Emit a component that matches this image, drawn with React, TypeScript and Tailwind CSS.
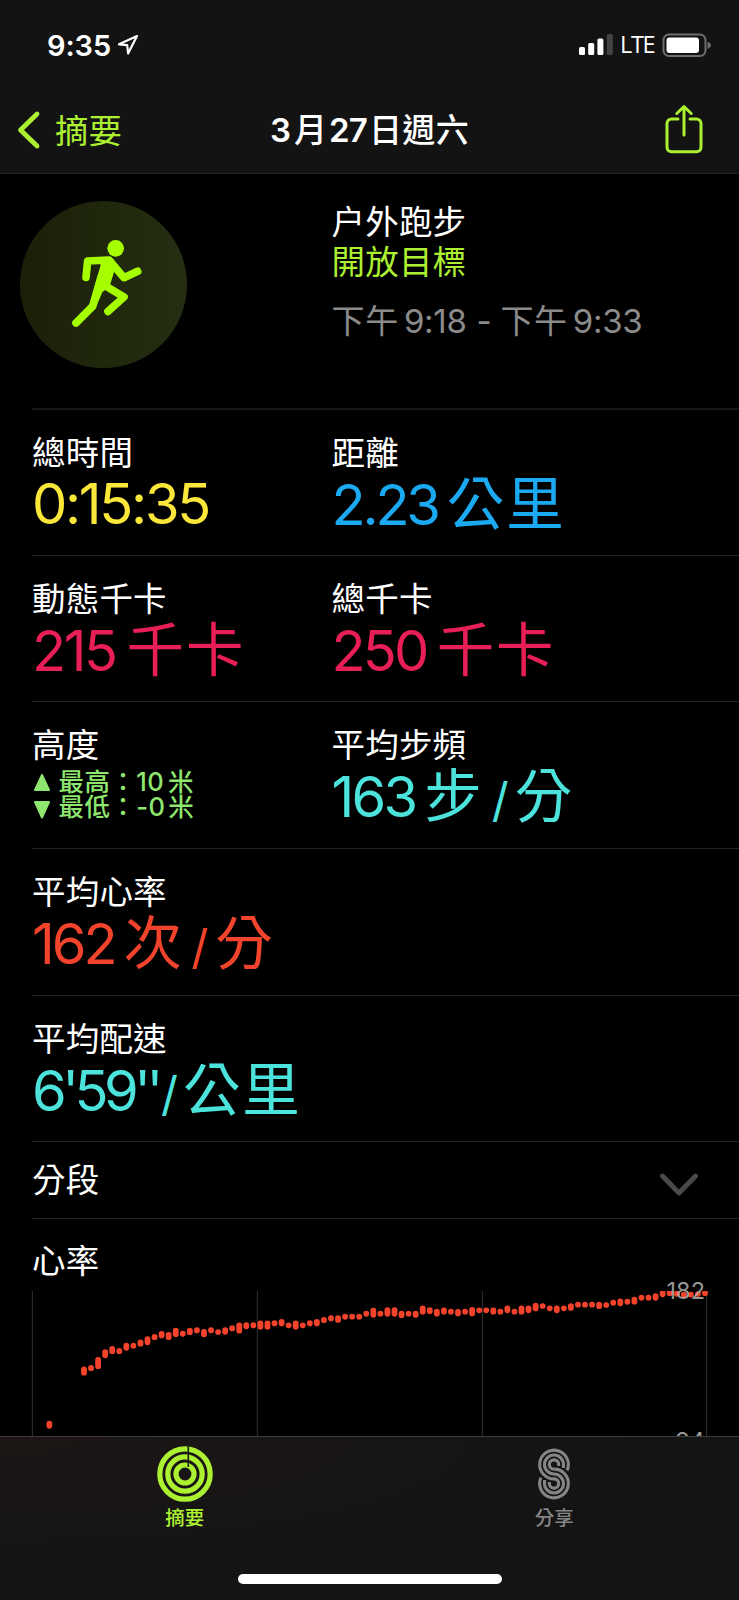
import type { ReactNode } from 'react';

// [y, height] of every heart rate sample, one sample per STEP
const SAMPLES = [
  [513, 27], [504, 18], [489, 36], [461, 27], [450, 24], [453, 18], [440, 24], [437, 17], [429, 21], [422, 27],
  [411, 18], [404, 22], [408, 24], [397, 28], [401, 18], [394, 22], [391, 18], [399, 24], [391, 18], [396, 17],
  [393, 22], [385, 18], [384, 33], [377, 21], [376, 18], [375, 27], [375, 27], [370, 18], [368, 22], [376, 17],
  [375, 27], [376, 17], [370, 18], [368, 22], [360, 18], [355, 18], [357, 23], [350, 18], [350, 17], [350, 17],
  [341, 18], [338, 30], [341, 17], [336, 28], [336, 28], [343, 22], [341, 17], [343, 21], [330, 27], [332, 21],
  [338, 23], [333, 21], [335, 17], [338, 22], [335, 17], [335, 28], [331, 17], [331, 17], [333, 21], [335, 17],
  [328, 23], [335, 17], [330, 27], [328, 23], [321, 26], [318, 17], [325, 17], [328, 23], [325, 17], [321, 23],
  [314, 17], [314, 17], [314, 17], [316, 22], [315, 17], [308, 18], [307, 23], [305, 18], [302, 23], [293, 18],
  [293, 17], [291, 22], [281, 21], [276, 24], [281, 18], [284, 18], [284, 17], [282, 17], [279, 18],
];
const FIRST_X = 252;
const STEP = 21.17;

function Label({ children }: { children: ReactNode }) {
  return <div className="h-10 whitespace-nowrap text-[33.500px] leading-10 tracking-[0.2px]">{children}</div>;
}

function Value({ color, children }: { color: string; children: ReactNode }) {
  return <div className={`flex h-16 items-baseline whitespace-nowrap text-[56px] leading-[62px] ${color}`}>{children}</div>;
}

function Num({ className = 'tracking-[-2.5px]', children }: { className?: string; children: ReactNode }) {
  return <span className={className}>{children}</span>;
}

function Unit({ className = 'ml-[10px]', children }: { className?: string; children: ReactNode }) {
  return <span className={`text-[57.500px] tracking-[2px] ${className}`}>{children}</span>;
}

function Slash({ className = 'ml-[8px]' }: { className?: string }) {
  return <span className={`inline-block w-[17px] text-[47px] ${className}`}>/</span>;
}

function Row({ height = 'h-[146px]', children }: { height?: string; children: ReactNode }) {
  return (
    <div className={`ml-8 grid shrink-0 grid-cols-[299.500px_1fr] border-b border-[#242424] pt-[23px] ${height}`}>
      {children}
    </div>
  );
}

function StatusBar() {
  return (
    <div className="flex h-[90px] items-center pl-[47px] pr-7 text-white">
      <span className="text-[29px] font-semibold leading-none tracking-[-0.1px]">9:35</span>
      <svg className="ml-[6px]" width="22" height="22" viewBox="0 0 22 22" fill="none" stroke="currentColor" strokeWidth="2.2" strokeLinejoin="round">
        <path d="M20 2 2 10.3l8.2.9.9 8.3z" />
      </svg>
      <div className="ml-auto flex items-center">
        <svg width="34" height="22" viewBox="0 0 34 22" fill="currentColor">
          <rect x="0" y="13" width="6" height="8" rx="1.6" />
          <rect x="9.2" y="9" width="6" height="12" rx="1.6" />
          <rect x="18.4" y="4.5" width="6" height="16.5" rx="1.6" />
          <rect x="27.8" y="0" width="6" height="21" rx="1.6" fill="#444" />
        </svg>
        <span className="ml-[7px] w-[36px] font-['Open_Sans','Noto_Sans',sans-serif] text-[23.500px] font-medium leading-none tracking-[-1.3px]">LTE</span>
        <svg className="ml-[6px]" width="49" height="24" viewBox="0 0 49 24">
          <rect x="1.500" y="1.500" width="42" height="21.5" rx="5.5" fill="none" stroke="#6e6e6e" strokeWidth="2" />
          <rect x="4.500" y="4.500" width="32.5" height="15.5" rx="3" fill="#fff" />
          <path d="M45.500 8.700c2.4.8 3.400 2 3.400 3.600s-1 2.800-3.400 3.600z" fill="#6e6e6e" />
        </svg>
      </div>
    </div>
  );
}

function NavBar() {
  return (
    <div className="grid h-[82px] grid-cols-[1fr_auto_1fr] items-center">
      <div className="flex items-center pl-[15px] text-[#acf032]">
        <svg className="mb-[2px]" width="26" height="40" viewBox="0 0 26 40" fill="none" stroke="currentColor" strokeWidth="4.8" strokeLinecap="round" strokeLinejoin="round">
          <path d="M22 4 5.500 20 22 36" />
        </svg>
        <span className="mb-px ml-[14px] text-[33.500px] leading-10">摘要</span>
      </div>
      <div className="flex items-baseline pb-[2px] text-[33px] font-medium leading-10 text-white">
        <span className="font-semibold">3</span>
        <span className="ml-[3px]">月</span>
        <span className="ml-[2px] font-semibold tracking-[-0.8px]">27</span>
        <span className="ml-[2px] tracking-[0.3px]">日週六</span>
      </div>
      <div className="flex justify-end pb-1 pr-[35px]">
        <svg width="40" height="50" viewBox="0 0 40 50" fill="none" stroke="#acf032" strokeWidth="3" strokeLinecap="round" strokeLinejoin="round">
          <path d="M14 15H7.500a4.500 4.500 0 0 0-4.500 4.500v23.800a4.500 4.500 0 0 0 4.500 4.500h25a4.500 4.500 0 0 0 4.500-4.500V19.500a4.500 4.500 0 0 0-4.500-4.500H26" />
          <path d="M20 31V3M12.800 9.500 20 2.500 27.200 9.500" />
        </svg>
      </div>
    </div>
  );
}

function Runner() {
  return (
    <svg width="167" height="167" viewBox="0 0 501 501" fill="none" stroke="#a6ff00" strokeWidth="23" strokeLinecap="round" strokeLinejoin="round">
      <circle cx="287" cy="142" r="25" fill="#a6ff00" stroke="none" />
      <path d="M198 229l5-49 64-3 45 53 41-19" />
      <path d="M252 252l60 36-48 43" />
      <path d="M168 366l50-50 26-90" />
      <path d="M228 168h38c14 2 24 16 20 32l-17 56-22 18-19 44-20-6 34-120z" fill="#a6ff00" stroke="none" />
    </svg>
  );
}

function HeartRateChart() {
  return (
    <div className="relative h-[145px]">
      <svg className="block" width="739" height="145" viewBox="0 273 2217 435">
        {[97, 772, 1447, 2120].map(x => (
          <line key={x} x1={x} x2={x} y1="273" y2="708" stroke="#333" strokeWidth="3" />
        ))}
        <g fill="#f5422a">
          <rect x="139.500" y="662" width="17" height="24" rx="8.500" />
          {SAMPLES.map(([y, h], i) => (
            <rect key={i} x={FIRST_X + i * STEP - 8.7} y={y - h / 2} width="17.400" height={h} rx="8.500" />
          ))}
        </g>
      </svg>
      <span className="absolute right-[34px] top-[-14px] text-[23.500px] leading-7 text-[#b4b4b4]/85">182</span>
      <span className="absolute right-[34px] top-[136px] text-[23.500px] leading-7 text-[#9a9a9a]">94</span>
    </div>
  );
}

function TabBar() {
  return (
    <div className="relative flex h-[164px] shrink-0 flex-col border-t border-[#3c3c3c] bg-[#141414] bg-[radial-gradient(ellipse_at_top_left,#1c1615_0%,#141414_60%)]">
      <div className="grid h-[92px] grid-cols-2 text-[19.500px] font-medium leading-6">
        <div className="flex flex-col items-center pt-[8px] text-[#acf032]">
          <svg width="58" height="58" viewBox="0 0 58 58" fill="none" stroke="currentColor" strokeWidth="5.200">
            <circle cx="29" cy="29" r="25.200" />
            <circle cx="29" cy="29" r="17.200" />
            <circle cx="29" cy="29" r="9" />
            <path d="M32.300 0v22" stroke="#141f0c" strokeWidth="1.600" />
          </svg>
          <span className="mt-[3px]">摘要</span>
        </div>
        <div className="flex flex-col items-center pt-[8px] text-[#858585]">
          <svg width="58" height="58" viewBox="-87 -87 174 174" fill="none" stroke="currentColor" strokeWidth="9.300">
            <path d="M39.300-11A43 43 0 1 0 0 14.500A14 14 0 1 1-14 28.500V24" />
            <path d="M28.500-18V-28.500A28.500 28.500 0 1 0 0 0A28.500 28.500 0 1 1-28.500 28.500V18" />
            <path d="M14-24V-28.500A14 14 0 1 0 0-14.500A43 43 0 1 1-39.300 11" />
          </svg>
          <span className="mt-[3px]">分享</span>
        </div>
      </div>
      <div className="mx-auto mt-[45px] h-[10px] w-[264px] rounded-full bg-white" />
    </div>
  );
}

export default function App() {
  return (
    <div className="flex h-[1600px] w-[739px] flex-col overflow-hidden bg-black font-['Inter','Noto_Sans_CJK_TC',sans-serif] text-white">
      <header className="h-[174px] shrink-0 border-b border-[#222] bg-[#131313]">
        <StatusBar />
        <NavBar />
      </header>

      {/* workout summary */}
      <div className="flex h-[234px] shrink-0 pl-5 pt-[27px]">
        <div className="size-[167px] rounded-full bg-linear-to-r from-[#1a2008] to-[#252e12]">
          <Runner />
        </div>
        <div className="ml-[144.500px] pt-px">
          <Label>户外跑步</Label>
          <div className="text-[#acf032]">
            <Label>開放目標</Label>
          </div>
          <div className="mt-[19px] flex items-baseline whitespace-nowrap text-[33px] leading-10 tracking-[-0.3px] text-[#8b8b8b]">
            <span className="tracking-[0.7px]">下午</span>
            <span className="ml-[5px]">9:18</span>
            <span className="ml-[10px]">-</span>
            <span className="ml-[9px] tracking-[0.7px]">下午</span>
            <span className="ml-[5px]">9:33</span>
          </div>
        </div>
      </div>
      <div className="ml-8 h-[2px] shrink-0 bg-[#161616]" />

      <Row>
        <div>
          <Label>總時間</Label>
          <Value color="text-[#fbe63a]"><Num className="tracking-[-2.300px]">0:15:35</Num></Value>
        </div>
        <div>
          <Label>距離</Label>
          <Value color="text-[#1ba9f2]"><Num className="tracking-[-3.2px]">2.23</Num><Unit className="ml-[9px]">公里</Unit></Value>
        </div>
      </Row>
      <Row>
        <div>
          <Label>動態千卡</Label>
          <Value color="text-[#e81e57]"><Num>215</Num><Unit className="ml-[11px]">千卡</Unit></Value>
        </div>
        <div>
          <Label>總千卡</Label>
          <Value color="text-[#e81e57]"><Num className="tracking-[-2.800px]">250</Num><Unit>千卡</Unit></Value>
        </div>
      </Row>
      <Row height="h-[147px]">
        <div>
          <Label>高度</Label>
          <div className="mt-1 flex text-[25.500px] font-medium leading-[25px] text-[#8ee66e]">
            <svg className="ml-[1.500px] mt-[5px] overflow-visible" width="16" height="46" viewBox="0 0 16 46" fill="currentColor" stroke="currentColor" strokeWidth="2" strokeLinejoin="round">
              <path d="M8 1 15 16H1zM8 43.500 1 28H15z" />
            </svg>
            <div className="ml-[9px] whitespace-nowrap tracking-[0.4px]">
              <div>最高：10<span className="ml-[4px]">米</span></div>
              <div>最低：-0<span className="ml-[3px]">米</span></div>
            </div>
          </div>
        </div>
        <div>
          <Label>平均步頻</Label>
          <Value color="text-[#4be3dc]"><Num className="tracking-[-2.800px]">163</Num><Unit className="ml-[9px]">步</Unit><Slash /><Unit className="ml-[6px]">分</Unit></Value>
        </div>
      </Row>
      <Row height="h-[147px]">
        <div>
          <Label>平均心率</Label>
          <Value color="text-[#f2432c]">
            <Num className="tracking-[-3px]">162</Num>
            <Unit className="ml-[9px] font-['Inter','Noto_Sans_CJK_JP',sans-serif]">次</Unit>
            <Slash />
            <Unit className="ml-[7px]">分</Unit>
          </Value>
        </div>
      </Row>
      <Row>
        <div>
          <Label>平均配速</Label>
          <Value color="text-[#4be3dc]"><Num className="tracking-[-4.500px]">6'59''</Num><Slash className="ml-[2px]" /><Unit className="ml-[5px]">公里</Unit></Value>
        </div>
      </Row>

      <div className="ml-8 flex h-[77px] shrink-0 items-center justify-between border-b border-[#242424] pr-[39px]">
        <div className="pb-px">
          <Label>分段</Label>
        </div>
        <svg className="mt-[10px]" width="42" height="26" viewBox="0 0 42 26" fill="none" stroke="#4a4a4a" strokeWidth="4.900" strokeLinecap="round" strokeLinejoin="round">
          <path d="M4.500 4 21 21 37.500 4" />
        </svg>
      </div>

      <div className="h-[217px] shrink-0">
        <div className="h-[72px] pl-8 pt-[22px]">
          <Label>心率</Label>
        </div>
        <HeartRateChart />
      </div>

      <TabBar />
    </div>
  );
}
